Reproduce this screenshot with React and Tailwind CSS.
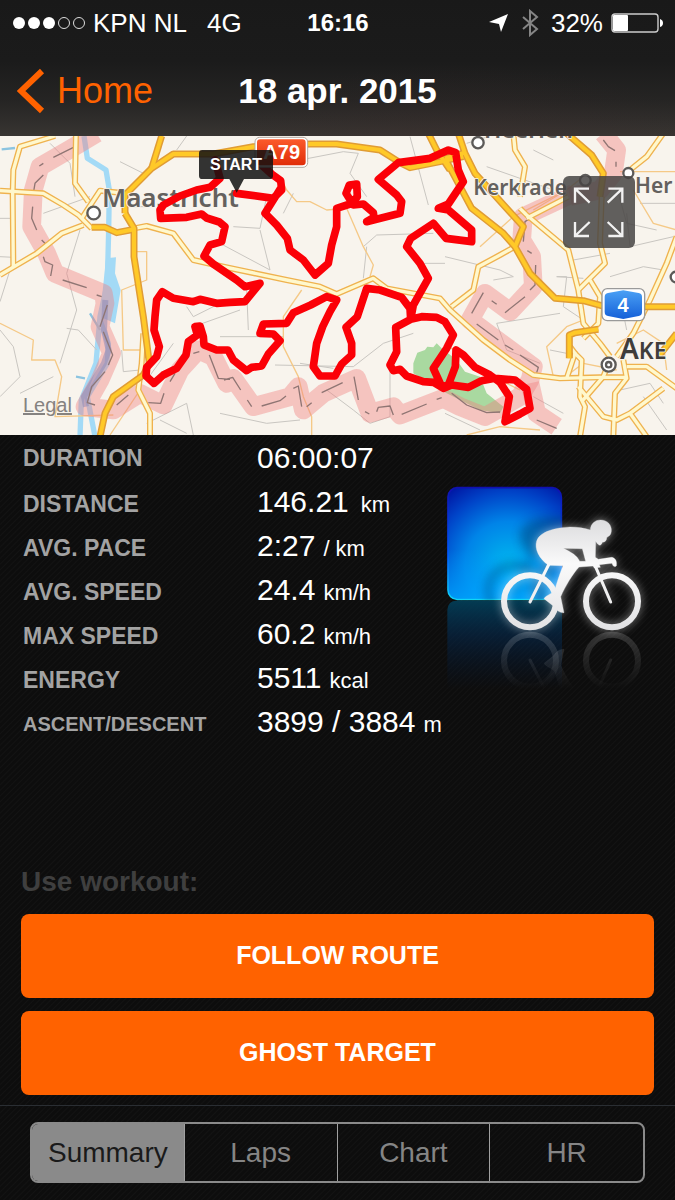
import { useState } from "react";

const stats = [
  { label: "DURATION", value: "06:00:07", unit: "" },
  { label: "DISTANCE", value: "146.21", unit: "km", wide: true },
  { label: "AVG. PACE", value: "2:27", unit: "/ km" },
  { label: "AVG. SPEED", value: "24.4", unit: "km/h" },
  { label: "MAX SPEED", value: "60.2", unit: "km/h" },
  { label: "ENERGY", value: "5511", unit: "kcal" },
  { label: "ASCENT/DESCENT", value: "3899 / 3884", unit: "m", small: true },
];

const tabs = ["Summary", "Laps", "Chart", "HR"];

// Map data, in map units (3 units = 1px at full width)
const motorways = [
  "M485 18 455 115",
  "M375 250 375 195 455 115 520 72 640 72 760 50 930 42 1010 42 1140 60 1200 98 1230 113 1320 95 1390 80",
  "M375 250 402 295 402 380 430 560 448 700 430 735",
  "M275 292 315 292 350 308 402 298",
  "M430 735 340 800 315 850 300 920",
  "M1375 10 1395 70 1425 130 1520 235 1570 290 1545 350",
  "M1335 85 1375 160 1415 235 1510 310 1545 350 1590 430 1665 505 1750 512 1815 530",
  "M1335 85 1395 68",
  "M1925 530 2030 530",
  "M1285 10 1310 60 1350 120",
  "M1700 10 1775 75 1810 130 1800 200",
  "M1708 685 1708 615 1725 608 1795 598",
  "M1975 680 2030 610",
];

const roads = [
  "M165 18 60 50 40 120 38 190 40 410",
  "M0 182 130 190 190 225 235 255 275 295",
  "M0 435 110 370 185 310 250 285",
  "M228 10 225 160 265 215",
  "M245 265 300 182 375 190",
  "M402 295 440 288 520 310 580 390 660 408 860 450 960 470 1010 492 1120 445 1160 475 1320 505 1350 540 1450 630 1530 690 1600 735 1680 745 1800 742 1880 742",
  "M430 610 425 700 415 780 450 850 450 920",
  "M1355 530 1420 480 1435 410 1500 375 1545 350",
  "M1540 10 1545 60 1575 110 1560 200",
  "M1560 235 1580 255 1705 360 1735 480 1750 580 1800 640 1830 680",
  "M1735 480 1815 400 1800 340 1805 200",
  "M1580 265 1705 200",
  "M1770 450 1800 500 1795 580 1750 625",
  "M2030 320 2000 400 1950 510 1900 610 1850 680",
  "M1700 745 1725 670 1710 650",
  "M1725 670 1745 690 1740 800 1755 830 1740 920",
  "M1735 770 1810 860 1850 870 1890 850 1990 775",
  "M1890 850 1940 920",
  "M1745 815 1810 740 1820 715",
  "M1870 690 1880 745 1845 790 1840 920",
  "M1880 710 1940 710 2030 775",
  "M1990 10 1940 80 1890 120",
];

const lanes = [
  "M0 580 100 630 95 690 165 690 185 740 165 860 340 855",
  "M410 365 440 365 440 450 365 480 370 660 430 660",
  "M840 140 860 180 890 215 930 215 980 240 1040 235 1090 350 1120 405 1110 440",
  "M905 480 850 560 850 650 895 740 910 800 935 860 935 920",
  "M1440 350 1540 260 1680 190",
  "M1860 125 2030 125",
  "M1335 640 1440 720 1560 780",
  "M1660 740 1640 650 1700 590 1750 570",
  "M1900 180 1960 280 2030 300",
  "M1850 640 1930 600 1990 640 2000 720",
  "M330 915 420 780",
  "M1400 915 1500 890 1620 900",
  "M1750 140 1700 180 1600 240",
  "M1690 745 1750 700 1850 720",
];

const tracks = [
  "M150 40 210 100 225 200",
  "M130 250 270 200",
  "M200 430 240 300 M200 430 230 540 180 700",
  "M0 515 30 420 M0 380 40 382 M0 265 40 265",
  "M0 600 40 650 60 740 0 800",
  "M200 595 235 600 290 660 M60 790 160 740",
  "M370 725 420 720 M370 725 365 660",
  "M390 230 440 230 M430 130 360 95 M530 60 560 18",
  "M440 880 560 820 580 915 M480 870 560 910",
  "M560 530 580 560 660 520 M440 750 520 640",
  "M580 590 720 540 M660 620 850 620 M745 600 740 480",
  "M700 290 780 295 800 200 M660 340 810 420 780 300",
  "M850 250 880 190 M900 90 1030 65 1075 70 1050 130 1100 200",
  "M1090 350 1130 315 1300 310 M1230 20 1285 225",
  "M1100 350 1090 445 M825 705 1060 710 1150 640 1240 610",
  "M1170 720 1170 860 1110 880 1060 840 980 780",
  "M660 850 800 880 900 870 M900 700 1000 715",
  "M1260 400 1335 400 M1335 380 1500 420 1540 440 1480 450",
  "M1490 580 1680 550 M1490 580 1520 660 1620 700",
  "M1670 440 1700 440 1690 530 1750 570 M1670 440 1750 445",
  "M1720 390 1830 370 M1880 250 1890 350 2020 320",
  "M1830 440 1930 410 1990 420 M1860 500 1880 600",
  "M1850 170 1880 280 1970 300 M1920 220 2030 220",
  "M1400 40 1470 18 M1460 110 1660 180 M1600 60 1660 90",
  "M1335 850 1440 900 M1600 800 1690 850",
  "M1700 670 1650 660 M1930 800 2000 900",
  "M1860 780 1950 760 1990 820",
];

const borders = [
  "M290 10 215 55 120 110 100 180 95 290 140 370 165 430 310 490 315 520 300 590 335 670 300 750 255 830 340 840 420 790 490 825 540 720 595 660 640 680 680 760 700 745 760 830 870 800 895 770 910 840 970 790 1070 745 1110 850 1180 830 1200 855 1330 805 1380 830 1455 860 1560 800 1590 750 1600 710 1410 570 1455 490 1530 545 1600 470 1595 380 1565 330 1570 260 1720 190",
  "M1590 760 1610 850 1670 890",
  "M1810 10 1850 60 1840 130 1800 180 1710 200",
];

const borderDashes =
  "M160 82 225 50M118 108 130 100M130 135 105 160 100 190M98 230 95 265 110 300M125 330 140 345M130 380 135 395 158 405 152 438M188 450 260 473M290 495 305 500M322 525 300 590M310 605 338 675 325 705M315 725 275 770 262 818 285 825M350 825 385 795M445 818 482 820 492 790M510 755 525 730M580 670 598 665M628 675 655 745 690 748M672 750 698 742 722 780M742 810 755 830M785 828 840 812 858 798M880 775 895 768 905 830M920 830 935 818M965 788 1028 758M1062 740 1075 810M1095 845 1108 852M1130 845 1135 832 1170 828 1180 855M1205 853 1280 822M1310 808 1325 803M1355 790 1400 825 1460 848 1500 846M1430 582 1495 630M1515 645 1540 660M1560 675 1615 712 1610 728M1450 488 1415 550M1475 512 1490 523M1515 548 1575 500M1590 480 1605 465 1607 405M1595 370 1582 362M1570 335 1575 275 1590 265M1610 870 1670 895M1810 30 1825 50 1845 62M1848 95 1848 110";

const route =
  "M710 190 820 205 845 180 842 152 815 132 790 110M645 90 660 145 630 172 590 180 540 198 490 225 480 240 482 265 560 262 605 252 620 264 658 276 675 290 665 335 630 345 612 378 640 402 710 450 735 470 780 460 757 488 735 515 690 517 650 520 600 508 580 515 520 505 487 485 470 510 465 560 462 600 478 650 470 680 440 712 438 738 462 760 490 735 530 715 558 675 565 635 592 615 585 590 600 588 610 620 612 645 650 660 684 660 700 690 740 722 755 712 785 708 805 672 840 632 820 612 780 610 790 582 860 580 880 548 932 525 980 500 1010 510 990 545 968 590 950 640 940 710 960 738 1005 738 1025 702 1055 675 1055 640 1038 592 1072 560 1100 475 1140 480 1205 502 1230 535 1232 568 1187 592 1190 665 1170 705 1180 722 1200 718 1220 738 1270 755 1300 757 1330 775 1355 765 1405 772 1445 752 1485 745 1545 750 1580 778 1590 835 1560 852 1515 875 1528 800 1500 757 1470 735 1425 712 1390 675 1368 660 1366 710 1345 765 1325 770 1300 715 1340 655 1360 615 1335 575 1310 562 1265 560 1232 568 1240 525 1285 445 1260 400 1220 350 1232 325 1300 280 1338 325 1415 335 1415 300 1345 240 1315 235 1345 222 1390 155 1375 120 1367 68 1345 60 1290 85 1195 98 1135 148 1190 195 1205 215 1200 250 1100 275 1122 262 1120 248 1090 222 1060 225 1038 190 1048 165 1070 162 1072 200 1050 222 1010 235 1010 290 995 345 985 400 945 435 910 390 870 360 862 325 830 285 795 250 842 175";

const RouteMap = () => (
  <svg
    viewBox="0 18 2025 897"
    className="block w-full"
    role="img"
    aria-label="Route map"
    fill="none"
    strokeLinejoin="round"
  >
    <defs>
      <linearGradient id="shieldRed" x1="0" y1="0" x2="0" y2="1">
        <stop offset="0" stopColor="#fb5a2c" />
        <stop offset="1" stopColor="#e02c08" />
      </linearGradient>
      <linearGradient id="shieldBlue" x1="0" y1="0" x2="0" y2="1">
        <stop offset="0" stopColor="#4aa0f5" />
        <stop offset="1" stopColor="#1560d8" />
      </linearGradient>
    </defs>
    <rect y="18" width="2025" height="897" fill="#f8f4ed" />
    <path
      d="M1240 700 1252 668 1275 660 1282 650 1300 652 1310 640 1325 655 1370 690 1395 725 1440 740 1460 790 1510 830 1500 850 1440 840 1340 790 1240 730Z"
      fill="#a9d9a0"
    />

    {/* river Maas */}
    <path
      d="M252 18 262 85 318 120 328 180 326 300 322 460 300 560 288 700 244 810 240 920M300 570 325 640 322 700 262 800 285 920"
      stroke="#a3daf6"
      strokeWidth="16"
    />
    <path d="M318 385 348 382 345 430 362 480 345 580 300 560Z" fill="#a3daf6" />
    <path d="M5 58 45 54M228 740 255 745M270 550 300 600" stroke="#8cc4e0" strokeWidth="7" />

    {tracks.map((d) => (
      <path key={d} d={d} stroke="#c9c6c1" strokeWidth="3" />
    ))}
    {lanes.map((d) => (
      <path key={d} d={d} stroke="#f5c987" strokeWidth="4" />
    ))}
    {borders.map((d) => (
      <path key={d} d={d} stroke="#f08080" strokeOpacity="0.42" strokeWidth="56" />
    ))}
    <path
      d="M316 510 312 600 326 660 312 700 252 800 258 830"
      stroke="#8a86b5"
      strokeOpacity="0.5"
      strokeWidth="18"
    />
    <path d={borderDashes} stroke="#8f7573" strokeWidth="4" />
    {roads.map((d) => (
      <path key={d} d={d} stroke="#efb24e" strokeWidth="18" />
    ))}
    {roads.map((d) => (
      <path key={d} d={d} stroke="#fff8cd" strokeWidth="10" />
    ))}
    {motorways.map((d) => (
      <path key={d} d={d} stroke="#e09c35" strokeWidth="21" />
    ))}
    {motorways.map((d) => (
      <path key={d} d={d} stroke="#ffc928" strokeWidth="12" />
    ))}

    {/* places */}
    <g fill="#fff" stroke="#5c5a58" strokeWidth="7">
      <circle cx="281" cy="249" r="19" />
      <circle cx="1434" cy="38" r="17" />
      <circle cx="1756" cy="151" r="16" />
      <circle cx="1885" cy="129" r="15" />
      <circle cx="2028" cy="441" r="16" />
      <circle cx="1826" cy="704" r="21" />
      <circle cx="1826" cy="704" r="8" />
    </g>
    <g
      className="font-['Noto_Sans',sans-serif] font-semibold"
      fill="#64615e"
      stroke="#f8f4ed"
      strokeWidth="5"
      paintOrder="stroke"
    >
      <text x="306" y="232" fontSize="78">Maastricht</text>
      <text x="1420" y="196" fontSize="63">Kerkrade</text>
      <text x="1905" y="190" fontSize="63">Her</text>
      <text x="1452" y="24" fontSize="69">Heerlen</text>
      <text x="1860" y="686" fontSize="84" fill="#3f3d3b">
        A<tspan fontSize="69">KE</tspan>
      </text>
    </g>

    <path d={route} stroke="#fb0007" strokeWidth="23" strokeLinecap="round" />

    {/* road shields */}
    <rect x="765" y="22" width="158" height="90" rx="14" fill="#fff" stroke="#b5aaa2" strokeWidth="3" />
    <rect x="771" y="28" width="146" height="78" rx="10" fill="url(#shieldRed)" />
    <text
      x="845"
      y="87"
      fontSize="60"
      textAnchor="middle"
      fill="#fff"
      className="font-['Liberation_Sans',sans-serif] font-bold"
    >
      A79
    </text>
    <rect x="1806" y="476" width="128" height="96" rx="16" fill="#fff" stroke="#9a9a9a" strokeWidth="4" />
    <path
      d="M1824 489 1870 481 1916 489Q1926 491 1926 501V546Q1926 556 1916 558L1870 567 1824 558Q1814 556 1814 546V501Q1814 491 1824 489Z"
      fill="url(#shieldBlue)"
    />
    <text
      x="1869"
      y="545"
      fontSize="60"
      textAnchor="middle"
      fill="#fff"
      className="font-['Liberation_Sans',sans-serif] font-bold"
    >
      4
    </text>

    {/* start callout */}
    <path
      d="M607 60H809Q819 60 819 70V137Q819 147 809 147H732L710 188 688 147H607Q597 147 597 137V70Q597 60 607 60Z"
      fill="#111"
      fillOpacity="0.85"
    />
    <text
      x="708"
      y="120"
      fontSize="48"
      textAnchor="middle"
      fill="#fff"
      className="font-['Liberation_Sans',sans-serif] font-bold"
    >
      START
    </text>
  </svg>
);

const Cyclist = () => (
  <>
    <path
      d="M481 180C482 160 496 150 512 150C532 150 546 165 544 184C543 196 536 199 530 203C530 213 524 216 517 217C515 226 508 228 503 222L497 214L496 262L505 268L545 262C556 264 562 274 559 288C552 293 548 287 546 280L508 284L511 292L493 294L489 288L447 291C428 312 408 345 392 380L402 428C390 429 380 422 370 408L342 386C348 375 362 374 374 362C380 340 388 315 399 287L356 286C326 266 313 235 320 213C330 183 380 173 420 171C445 171 465 175 481 180ZM400 235C425 248 441 256 449 274L467 274L457 236Z"
      fillRule="evenodd"
    />
    <circle cx="300" cy="394" r="78" fill="none" strokeWidth="18" />
    <circle cx="546" cy="394" r="78" fill="none" strokeWidth="18" />
    <path d="M357 282 300 396M494 284 542 396" fill="none" strokeWidth="9" strokeLinecap="round" />
  </>
);

const CyclingBadge = () => (
  <svg viewBox="45 0 690 720" className="block w-full" role="img" aria-label="Cycling">
    <defs>
      <radialGradient id="tile" gradientUnits="userSpaceOnUse" cx="235" cy="285" r="290">
        <stop offset="0" stopColor="#00b8ee" />
        <stop offset="0.45" stopColor="#0084e8" />
        <stop offset="0.75" stopColor="#0044c8" />
        <stop offset="1" stopColor="#0012a0" />
      </radialGradient>
      <linearGradient id="tileEdge" x1="0" y1="0" x2="0" y2="1">
        <stop offset="0" stopColor="#1010b0" />
        <stop offset="0.6" stopColor="#0058ff" />
        <stop offset="1" stopColor="#10d8f8" />
      </linearGradient>
      <linearGradient id="tileFoot" x1="0" y1="0" x2="0" y2="1">
        <stop offset="0.55" stopColor="#00a0ff" stopOpacity="0" />
        <stop offset="1" stopColor="#00a8ff" stopOpacity="0.8" />
      </linearGradient>
      <linearGradient id="tileMirror" x1="0" y1="0" x2="0" y2="1">
        <stop offset="0" stopColor="#02405a" stopOpacity="0.9" />
        <stop offset="0.4" stopColor="#042b52" stopOpacity="0.55" />
        <stop offset="1" stopColor="#04183a" stopOpacity="0" />
      </linearGradient>
      <linearGradient id="body" gradientUnits="userSpaceOnUse" x1="0" y1="150" x2="0" y2="480">
        <stop offset="0" stopColor="#dcdcde" />
        <stop offset="0.4" stopColor="#fafafa" />
        <stop offset="1" stopColor="#e2e2e4" />
      </linearGradient>
      <linearGradient id="fade" gradientUnits="userSpaceOnUse" x1="0" y1="484" x2="0" y2="310">
        <stop offset="0" stopColor="#fff" stopOpacity="0.17" />
        <stop offset="1" stopColor="#fff" stopOpacity="0" />
      </linearGradient>
      <filter id="glow" x="-20%" y="-20%" width="140%" height="140%">
        <feGaussianBlur stdDeviation="14" />
      </filter>
      <clipPath id="tileClip">
        <rect x="52" y="51" width="344" height="339" rx="28" />
      </clipPath>
    </defs>
    <rect x="54" y="53" width="340" height="335" rx="28" fill="url(#tile)" stroke="url(#tileEdge)" strokeWidth="5" />
    <rect x="56" y="55" width="336" height="331" rx="26" fill="url(#tileFoot)" />
    <g clipPath="url(#tileClip)">
      <g transform="translate(-48 -30)" fill="#003a6a" stroke="#003a6a" opacity="0.45" filter="url(#glow)">
        <Cyclist />
      </g>
    </g>
    <path d="M52 660V420Q54 392 80 392H370Q396 392 396 420V660Z" fill="url(#tileMirror)" />
    <g transform="matrix(1 0 0 -1 0 966)" fill="url(#fade)" stroke="url(#fade)">
      <Cyclist />
    </g>
    <g fill="#fff" stroke="#fff" opacity="0.5" filter="url(#glow)">
      <Cyclist />
    </g>
    <g fill="url(#body)" stroke="url(#body)">
      <Cyclist />
    </g>
  </svg>
);

const StatusBar = () => (
  <div className="grid grid-cols-[1fr_auto_1fr] items-center h-[46px] pl-[13px] pr-3 text-[26px]">
    <div className="flex items-center">
      <svg viewBox="0 0 72 14" className="w-[72px] h-[14px] mr-2" aria-hidden="true">
        <g fill="#fff">
          <circle cx="6" cy="7" r="6" />
          <circle cx="21" cy="7" r="6" />
          <circle cx="36" cy="7" r="6" />
        </g>
        <g fill="none" stroke="#ddd">
          <circle cx="51" cy="7" r="5.5" />
          <circle cx="66" cy="7" r="5.5" />
        </g>
      </svg>
      <span>KPN NL</span>
      <span className="ml-5">4G</span>
    </div>
    <span className="text-2xl font-bold">16:16</span>
    <div className="flex items-center justify-end">
      <svg viewBox="0 0 20 20" className="w-5 h-5 mr-3" aria-hidden="true">
        <path d="M19 1 12 19 10 11 0 9Z" fill="#fff" />
      </svg>
      <svg viewBox="0 0 18 28" className="w-[18px] h-7 mr-3" aria-hidden="true">
        <path d="M2 8 16 20 9 26V2L16 8 2 20" fill="none" stroke="#858585" strokeWidth="2" />
      </svg>
      <span>32%</span>
      <svg viewBox="0 0 52 20" className="w-[52px] h-5 ml-2" aria-hidden="true">
        <rect x="1" y="1" width="46" height="18" rx="3" fill="none" stroke="#ccc" strokeWidth="1.4" />
        <rect x="2" y="2" width="15" height="16" rx="1" fill="#fff" />
        <path d="M49 6Q52 7 52 10T49 14Z" fill="#fff" />
      </svg>
    </div>
  </div>
);

const App = () => {
  const [activeTab, setActiveTab] = useState("Summary");

  return (
    <div className="flex flex-col min-h-screen bg-[#0e0e0e] bg-[repeating-linear-gradient(135deg,#0d0d0d_0px,#0d0d0d_2px,#131313_3px,#0d0d0d_4px)] text-white font-['Liberation_Sans',Arial,sans-serif]">
      <header className="bg-[radial-gradient(ellipse_at_68%_110%,#40282844,transparent_40%),linear-gradient(#191919,#1b1b1b_45%,#262524_75%,#383532)]">
        <StatusBar />
        <div className="grid grid-cols-[1fr_auto_1fr] items-center h-[90px] px-[17px]">
          <a href="#home" className="flex items-center text-4xl text-[#ff6200]">
            <svg viewBox="0 0 28 46" className="w-7 h-[46px] mr-3" aria-hidden="true">
              <path d="M25 3 4 23 25 43" fill="none" stroke="currentColor" strokeWidth="6" />
            </svg>
            Home
          </a>
          <h1 className="text-[35px] font-bold">18 apr. 2015</h1>
        </div>
      </header>

      <div className="relative overflow-hidden">
        <RouteMap />
        <a href="#legal" className="absolute left-[23px] bottom-[18px] text-[20px] leading-6 text-[#858280] underline">
          Legal
        </a>
        <button
          type="button"
          aria-label="Full screen"
          className="absolute right-10 top-10 w-[72px] h-[72px] rounded-md bg-[#464443]/85 cursor-pointer"
        >
          <svg viewBox="0 0 216 216" className="w-full h-full" fill="none" stroke="#f2f2f2" strokeWidth="7">
            <path d="M36 80V38H78M36 38 80 80M136 38H178V80M178 38 134 80M36 138V180H78M36 180 80 138M136 180H178V138M178 180 134 138" />
          </svg>
        </button>
      </div>

      <section className="flex">
        <dl className="flex-1 pl-[23px] pt-px">
          {stats.map((stat) => (
            <div key={stat.label} className="grid grid-cols-[234px_1fr] items-center h-11 leading-[44px] whitespace-nowrap">
              <dt
                className={
                  stat.small
                    ? "text-[20px] font-bold text-[#a3a3a3]"
                    : "text-[23px] font-bold text-[#a3a3a3]"
                }
              >
                {stat.label}
              </dt>
              <dd className="text-[30px]">
                {stat.value}
                {stat.unit && (
                  <span className={stat.wide ? "ml-3 text-[22px]" : "ml-2 text-[22px]"}>{stat.unit}</span>
                )}
              </dd>
            </div>
          ))}
        </dl>
        <div className="w-[230px] shrink-0 pt-[35px]">
          <CyclingBadge />
        </div>
      </section>

      <section className="flex flex-col gap-[13px] mt-auto px-[21px] pb-[10px]">
        <h2 className="text-[28px] leading-[38px] font-bold text-[#3f3f3f]">Use workout:</h2>
        <button type="button" className="h-[84px] rounded-lg bg-[#ff6200] text-[25px] font-bold cursor-pointer">
          FOLLOW ROUTE
        </button>
        <button type="button" className="h-[84px] rounded-lg bg-[#ff6200] text-[25px] font-bold cursor-pointer">
          GHOST TARGET
        </button>
      </section>

      <nav className="border-t border-[#2a2e33] px-[30px] pt-4 pb-[17px]">
        <div className="grid grid-cols-4 h-[61px] border-2 border-[#8a8a8a] rounded-lg overflow-hidden divide-x divide-[#a0a0a0]">
          {tabs.map((tab) => (
            <button
              key={tab}
              type="button"
              aria-pressed={tab === activeTab}
              onClick={() => setActiveTab(tab)}
              className={
                tab === activeTab
                  ? "bg-[#8a8a8a] text-[#1a1a1a] text-[28px] cursor-pointer"
                  : "text-[#858585] text-[28px] cursor-pointer"
              }
            >
              {tab}
            </button>
          ))}
        </div>
      </nav>
    </div>
  );
};

export default App;
